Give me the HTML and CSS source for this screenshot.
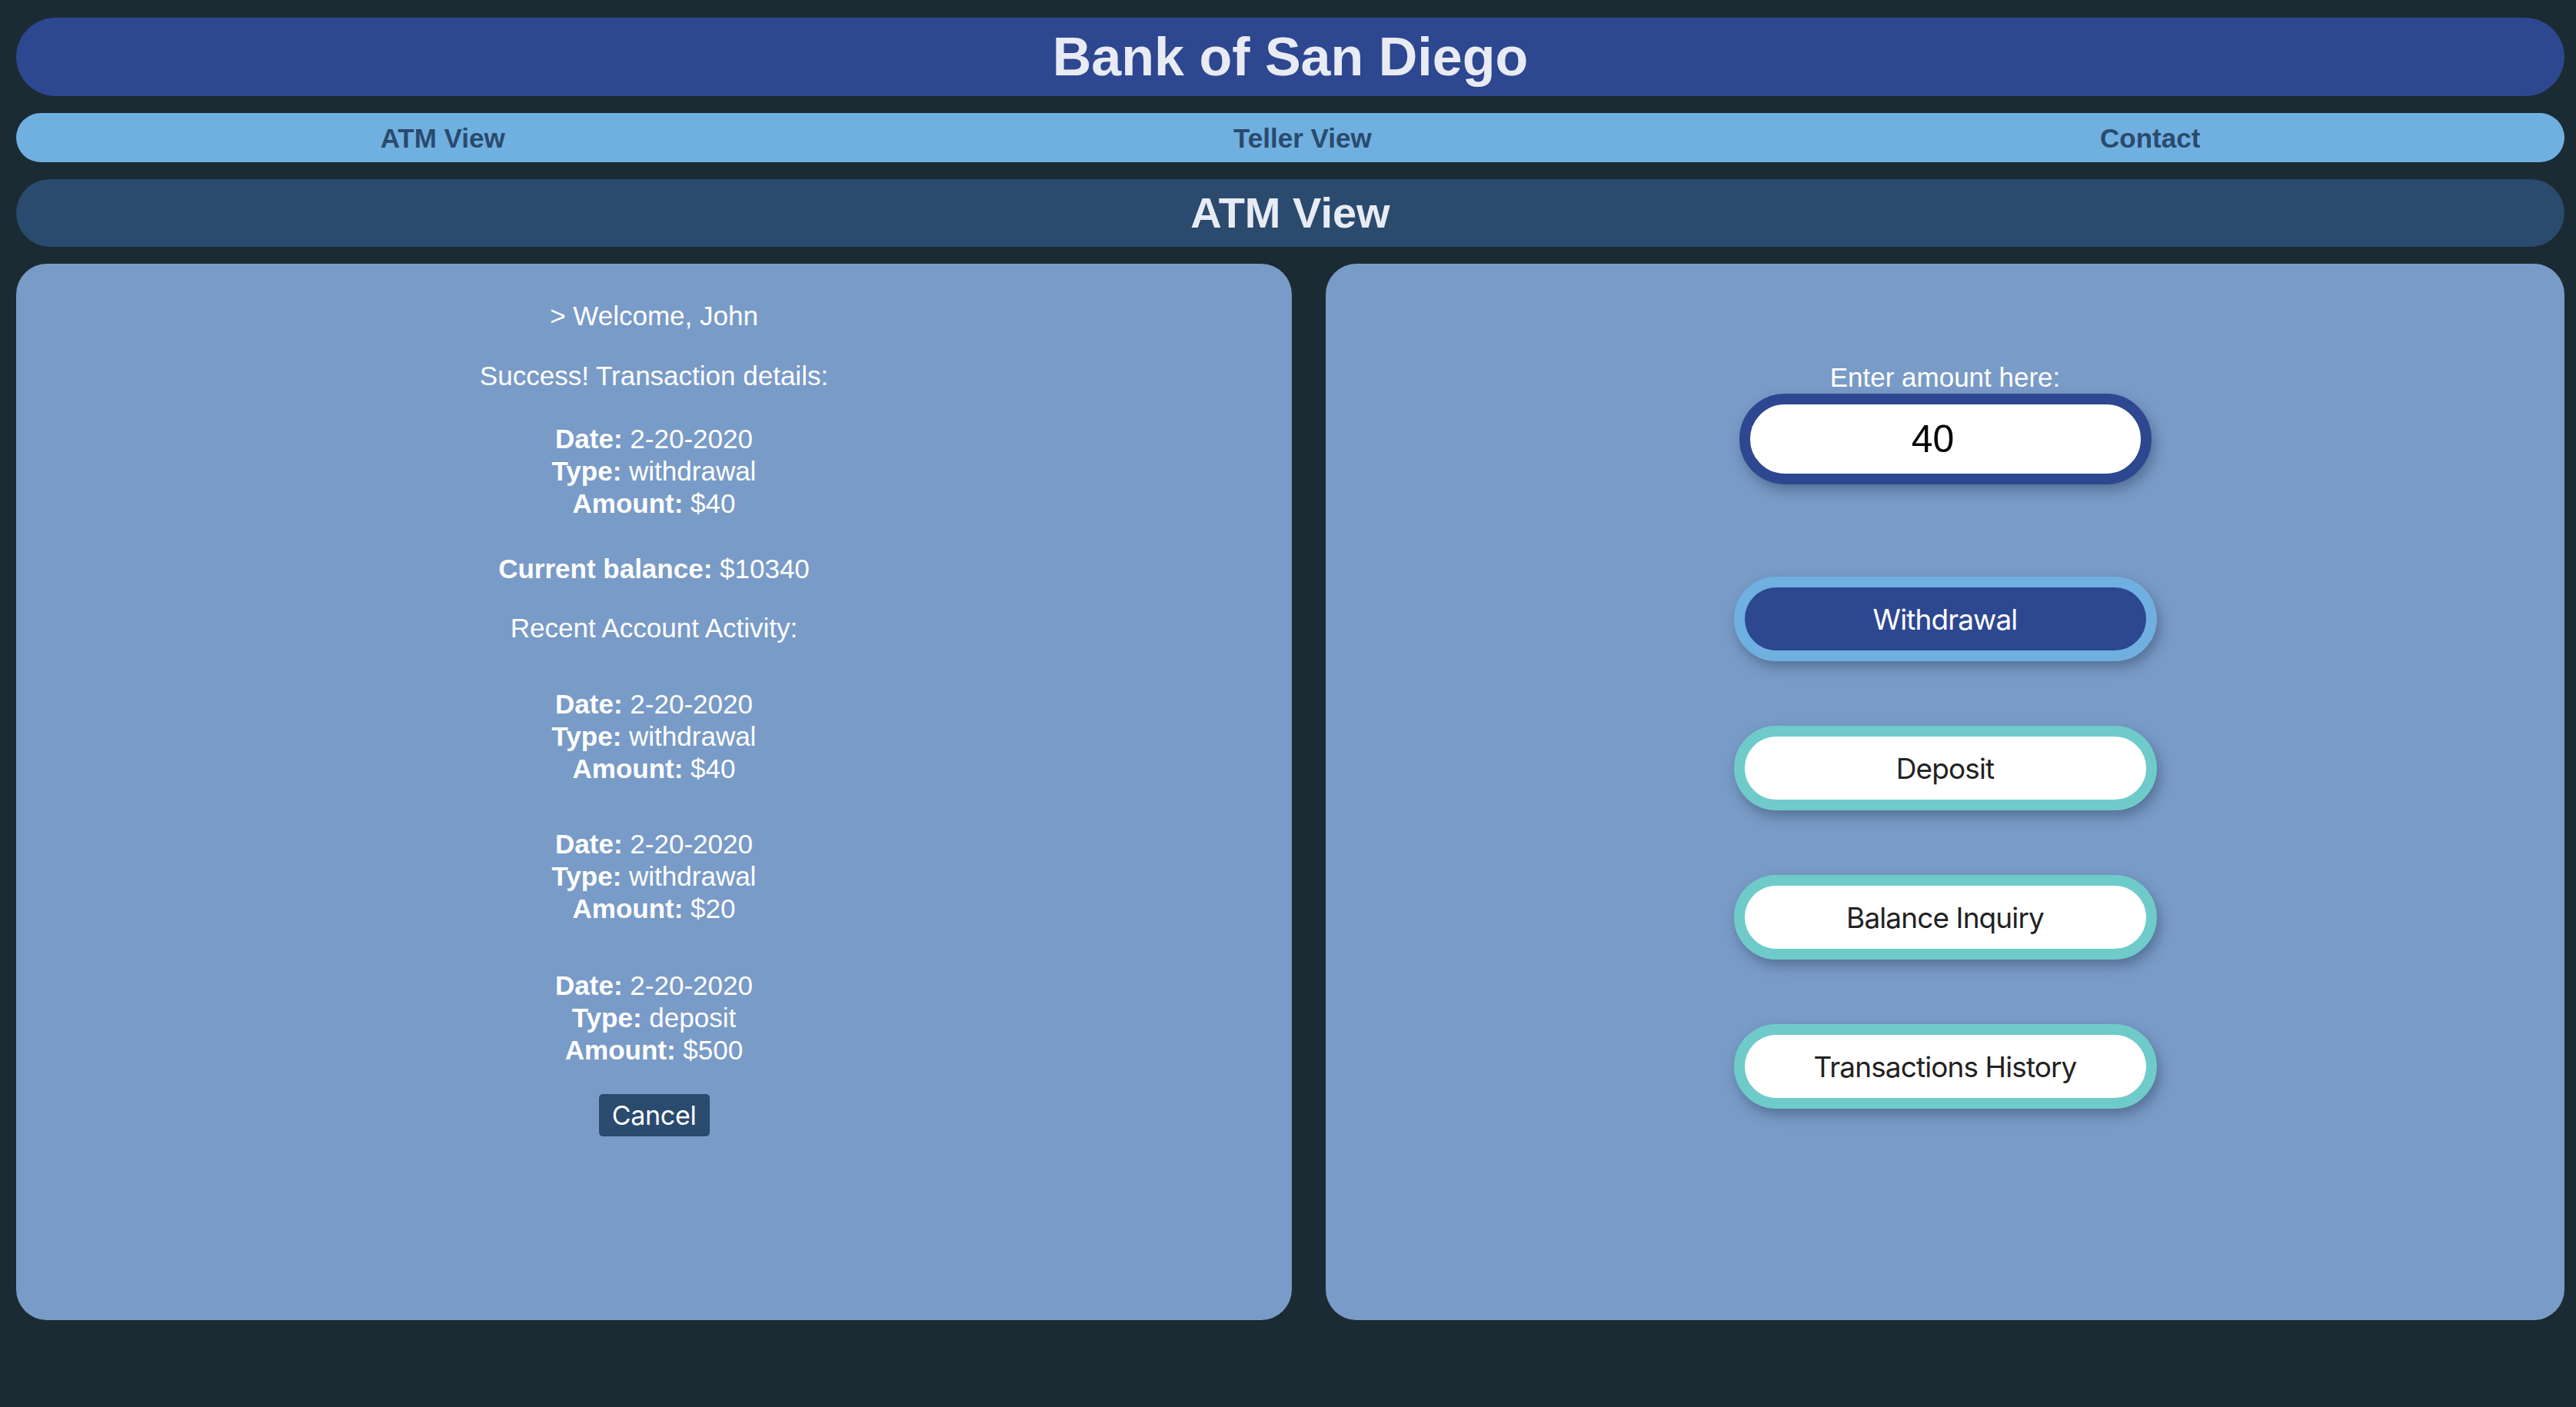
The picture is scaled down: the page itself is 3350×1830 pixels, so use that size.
FILE: index.html
```html
<!DOCTYPE html>
<html lang="en">
<head>
<meta charset="utf-8">
<title>Bank of San Diego</title>
<link rel="stylesheet" href="styles.css">
</head>
<body>
  <header class="banner"><h1 class="banner-title">Bank of San Diego</h1></header>
  <nav class="nav">
    <a class="nav-link">ATM View</a>
    <a class="nav-link">Teller View</a>
    <a class="nav-link">Contact</a>
  </nav>
  <div class="page-title"><h2 class="page-title-text">ATM View</h2></div>
  <main class="panels">
    <section class="panel panel-left">
      <p class="line welcome">&gt; Welcome, John</p>
      <p class="line success">Success! Transaction details:</p>
      <div class="block trans">
        <div><b>Date:</b> 2-20-2020</div>
        <div><b>Type:</b> withdrawal</div>
        <div><b>Amount:</b> $40</div>
      </div>
      <p class="line balance"><b>Current balance:</b> $10340</p>
      <p class="line recent">Recent Account Activity:</p>
      <div class="block act act1">
        <div><b>Date:</b> 2-20-2020</div>
        <div><b>Type:</b> withdrawal</div>
        <div><b>Amount:</b> $40</div>
      </div>
      <div class="block act act2">
        <div><b>Date:</b> 2-20-2020</div>
        <div><b>Type:</b> withdrawal</div>
        <div><b>Amount:</b> $20</div>
      </div>
      <div class="block act act3">
        <div><b>Date:</b> 2-20-2020</div>
        <div><b>Type:</b> deposit</div>
        <div><b>Amount:</b> $500</div>
      </div>
      <button class="cancel" type="button">Cancel</button>
    </section>
    <section class="panel panel-right">
      <label class="amount-label" for="amt">Enter amount here:</label>
      <input class="amount-input" id="amt" type="text" value="40">
      <button class="action action-active" type="button">Withdrawal</button>
      <button class="action" type="button">Deposit</button>
      <button class="action" type="button">Balance Inquiry</button>
      <button class="action" type="button">Transactions History</button>
    </section>
  </main>
</body>
</html>
```
FILE: styles.css
```css
html, body {
  margin: 0;
  padding: 0;
}
body {
  background: #1a2b33;
  padding: 23px 15px 0 21px;
  height: 1830px;
  box-sizing: border-box;
  font-family: "Liberation Sans", Arial, sans-serif;
  color: #ffffff;
  overflow: hidden;
}
.banner {
  height: 102px;
  background: #2d4790;
  border-radius: 51px;
  display: flex;
  align-items: center;
  justify-content: center;
  margin-bottom: 22px;
}
.banner-title {
  margin: 0;
  font-size: 70px;
  font-weight: bold;
  color: #e8ebf4;
  line-height: 1;
}
.nav {
  height: 64px;
  background: #70b0e0;
  border-radius: 32px;
  display: flex;
  margin-bottom: 22px;
}
.nav-link {
  flex: 1 1 auto;
  display: flex;
  align-items: center;
  justify-content: center;
  font-size: 35px;
  font-weight: bold;
  color: #2a4a6e;
  padding-top: 2px;
}
.page-title {
  height: 88px;
  background: #2a4a6e;
  border-radius: 44px;
  display: flex;
  align-items: center;
  justify-content: center;
  margin-bottom: 22px;
}
.page-title-text {
  margin: 0;
  font-size: 56px;
  font-weight: bold;
  color: #e8ebf4;
  line-height: 1;
}
.panels {
  display: grid;
  grid-template-columns: 1659fr 1611fr;
  column-gap: 44px;
  height: 1374px;
}
.panel {
  background: #799bc7;
  border-radius: 40px;
  display: flex;
  flex-direction: column;
  align-items: center;
}
.panel-left {
  padding-top: 47px;
  font-size: 35px;
  line-height: 42px;
  text-align: center;
}
.line { margin: 0; }
.block { margin: 0; }
.success { margin-top: 36px; }
.trans { margin-top: 40px; }
.balance { margin-top: 43px; }
.recent { margin-top: 35px; }
.act1 { margin-top: 57px; }
.act2 { margin-top: 56px; }
.act3 { margin-top: 58px; }
.cancel {
  margin-top: 36px;
  width: 144px;
  height: 55px;
  padding: 0;
  border: none;
  border-radius: 5px;
  background: #2a4a6e;
  color: #ffffff;
  font-family: Inter, "Liberation Sans", sans-serif;
  font-size: 34px;
  letter-spacing: -0.3px;
  line-height: 55px;
}
.panel-right {
  padding-top: 127px;
}
.amount-label {
  font-size: 35px;
  line-height: 42px;
  color: #ffffff;
}
.amount-input {
  box-sizing: border-box;
  width: 536px;
  height: 118px;
  border: 14px solid #2d4790;
  border-radius: 59px;
  background: #ffffff;
  font-family: "Liberation Sans", Arial, sans-serif;
  font-size: 50px;
  color: #000000;
  text-align: center;
  padding: 0 32px 0 0;
  outline: none;
  box-shadow: 4px 8px 16px rgba(20, 35, 60, 0.35);
}
.action {
  box-sizing: border-box;
  width: 550px;
  height: 110px;
  margin-top: 84px;
  border: 14px solid #6fcbc9;
  border-radius: 55px;
  background: #ffffff;
  color: #222222;
  font-family: Inter, "Liberation Sans", sans-serif;
  font-size: 37px;
  letter-spacing: -0.9px;
  padding: 0;
  box-shadow: 4px 8px 16px rgba(20, 35, 60, 0.35);
}
.action-active {
  margin-top: 120px;
  border-color: #70b0e0;
  background: #2d4790;
  color: #ffffff;
}
```
